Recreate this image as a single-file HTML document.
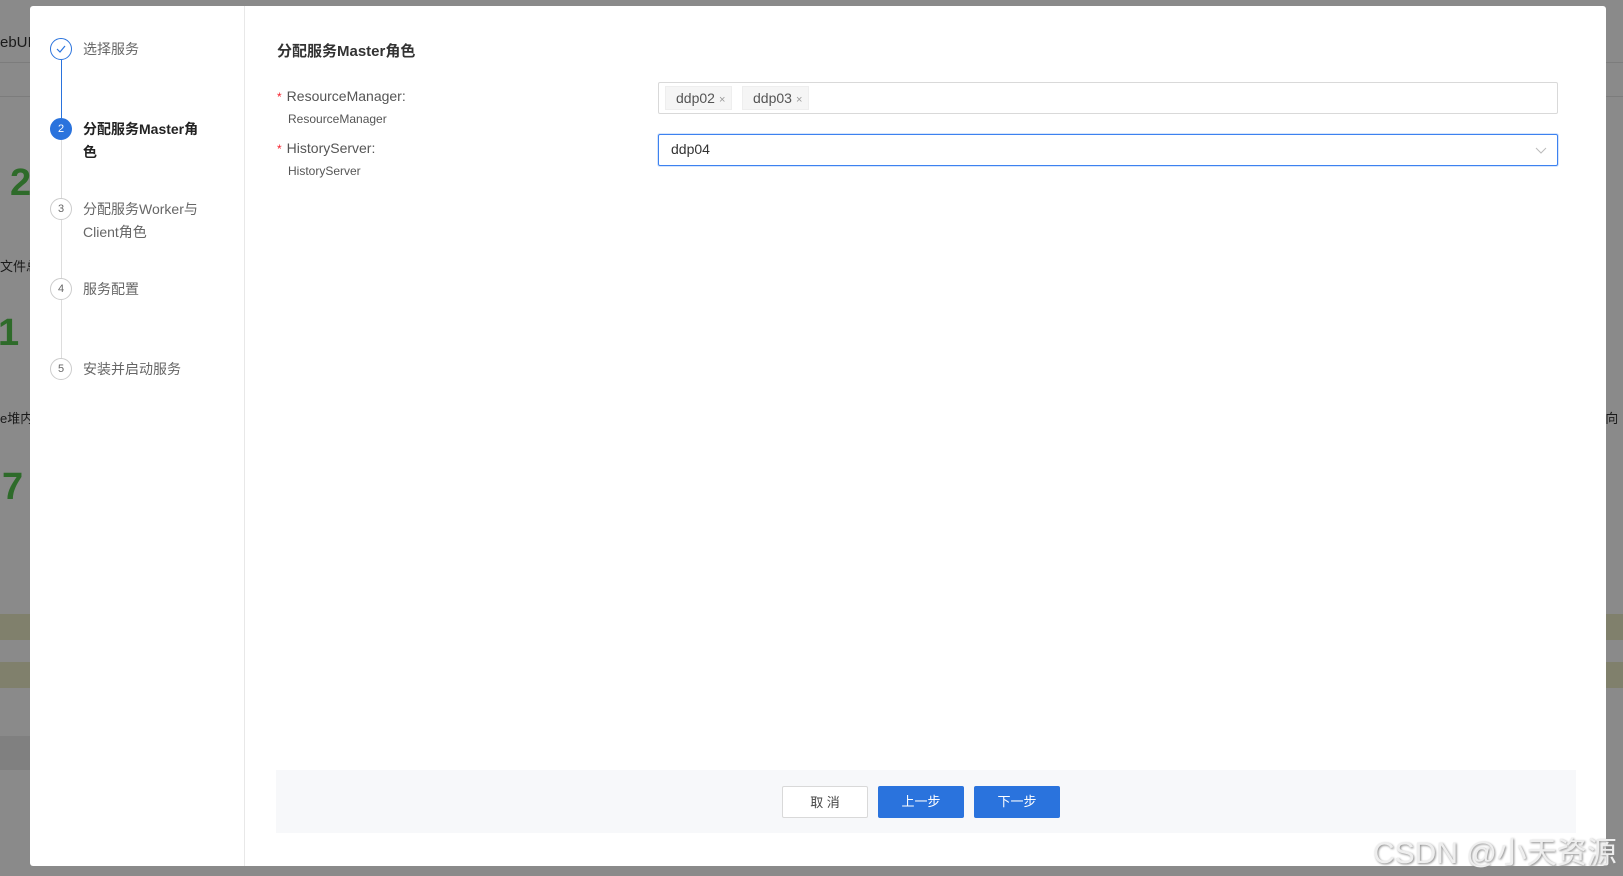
<!DOCTYPE html>
<html><head><meta charset="utf-8"><style>
*{box-sizing:border-box;margin:0;padding:0}
body{width:1623px;height:876px;overflow:hidden;background:#8a8a8a;font-family:"Liberation Sans","Noto Sans CJK SC",sans-serif;position:relative}
.bg{position:absolute;color:#1a1a1a;font-size:14px}
.big{position:absolute;color:#2e6b2a;font-size:38px;font-weight:bold}
.modal{position:absolute;left:30px;top:6px;width:1576px;height:860px;background:#fff;border-radius:3px}
.side{position:absolute;left:0;top:0;width:215px;height:100%;border-right:1px solid #e8e8e8}
.step{position:absolute;left:20px;width:190px}
.circ{position:absolute;left:0;width:22px;height:22px;border-radius:50%;border:1px solid #ccc;font-size:11px;color:#666;text-align:center;line-height:20px;background:#fff}
.st{position:absolute;left:33px;top:0px;font-size:14px;color:#666;line-height:23px}
.line{position:absolute;left:31px;width:1px;background:#ddd}
h2{position:absolute;left:247px;top:34px;font-size:15px;font-weight:bold;color:#333}
.lab{position:absolute;left:247px;font-size:14px;color:#555}
.lab b{color:#f5222d;font-weight:normal;margin-right:5px;font-size:12px}
.sub{position:absolute;left:258px;font-size:12px;color:#555}
.sel{position:absolute;left:628px;width:900px;height:32px;border:1px solid #d9d9d9;border-radius:2px}
.tag{position:absolute;top:3px;height:24px;background:#f5f5f5;border:1px solid #eee;font-size:14px;color:#555;line-height:22px;padding:0 6px 0 10px}
.tag i{font-style:normal;font-size:11px;color:#999;margin-left:4px}
.foot{position:absolute;left:246px;top:764px;width:1300px;height:63px;background:#f7f8fa}
.btn{position:absolute;top:16px;width:86px;height:32px;border-radius:2px;font-size:13px;text-align:center;line-height:31px}
</style></head><body>
<div class="bg" style="left:0;top:34px;font-size:15px">ebUI</div>
<div style="position:absolute;left:0;top:62px;width:1623px;height:1px;background:#7c7c7c"></div>
<div style="position:absolute;left:0;top:96px;width:1623px;height:1px;background:#7c7c7c"></div>
<div class="big" style="left:10px;top:162px">2</div>
<div class="bg" style="left:0;top:256px;font-size:13px">文件总</div>
<div class="big" style="left:-2px;top:312px">1</div>
<div class="bg" style="left:0;top:408px;font-size:13px">e堆内</div>
<div class="bg" style="left:1598px;top:408px;font-size:13px">e向</div>
<div class="big" style="left:2px;top:466px">7</div>
<div style="position:absolute;left:0;top:614px;width:30px;height:26px;background:#80806c"></div>
<div style="position:absolute;left:0;top:662px;width:30px;height:26px;background:#80806c"></div>
<div style="position:absolute;left:1606px;top:614px;width:17px;height:26px;background:#80806c"></div>
<div style="position:absolute;left:1606px;top:662px;width:17px;height:26px;background:#80806c"></div>
<div style="position:absolute;left:0;top:736px;width:30px;height:34px;background:#808080"></div>

<div class="modal">
 <div class="side">
  <div class="line" style="top:54px;height:70px;background:#2a73dd"></div>
  <div class="line" style="top:134px;height:240px"></div>
  <div class="step" style="top:32px"><div class="circ" style="border-color:#2a73dd;color:#2a73dd"><svg width="12" height="12" viewBox="0 0 12 12" style="margin-top:4px"><path d="M2 6l3 3 5-6" fill="none" stroke="#2a73dd" stroke-width="1.2"/></svg></div><div class="st">选择服务</div></div>
  <div class="step" style="top:112px"><div class="circ" style="background:#2a73dd;border-color:#2a73dd;color:#fff">2</div><div class="st" style="color:#222;font-weight:bold">分配服务Master角<br>色</div></div>
  <div class="step" style="top:192px"><div class="circ">3</div><div class="st">分配服务Worker与<br>Client角色</div></div>
  <div class="step" style="top:272px"><div class="circ">4</div><div class="st">服务配置</div></div>
  <div class="step" style="top:352px"><div class="circ">5</div><div class="st">安装并启动服务</div></div>
 </div>
 <h2>分配服务Master角色</h2>
 <div class="lab" style="top:82px"><b>*</b>ResourceManager:</div>
 <div class="sub" style="top:106px">ResourceManager</div>
 <div class="lab" style="top:134px"><b>*</b>HistoryServer:</div>
 <div class="sub" style="top:158px">HistoryServer</div>
 <div class="sel" style="top:76px"><div class="tag" style="left:6px">ddp02<i>×</i></div><div class="tag" style="left:83px">ddp03<i>×</i></div></div>
 <div class="sel" style="top:128px;border-color:#3d82f0;box-shadow:0 0 0 1px #d6e5fc"><span style="position:absolute;left:12px;top:6px;font-size:14px;color:#333">ddp04</span><svg width="12" height="8" style="position:absolute;right:10px;top:12px"><path d="M1 1l5 5 5-5" fill="none" stroke="#bbb"/></svg></div>
 <div class="foot">
  <div class="btn" style="left:506px;border:1px solid #d9d9d9;background:#fff;color:#444">取 消</div>
  <div class="btn" style="left:602px;background:#2a73dd;color:#fff">上一步</div>
  <div class="btn" style="left:698px;background:#2a73dd;color:#fff">下一步</div>
 </div>
</div>
<div style="position:absolute;left:1373px;top:828px;font-size:30px;color:#eee;text-shadow:1px 1px 2px #888">CSDN @小天资源</div>
</body></html>
